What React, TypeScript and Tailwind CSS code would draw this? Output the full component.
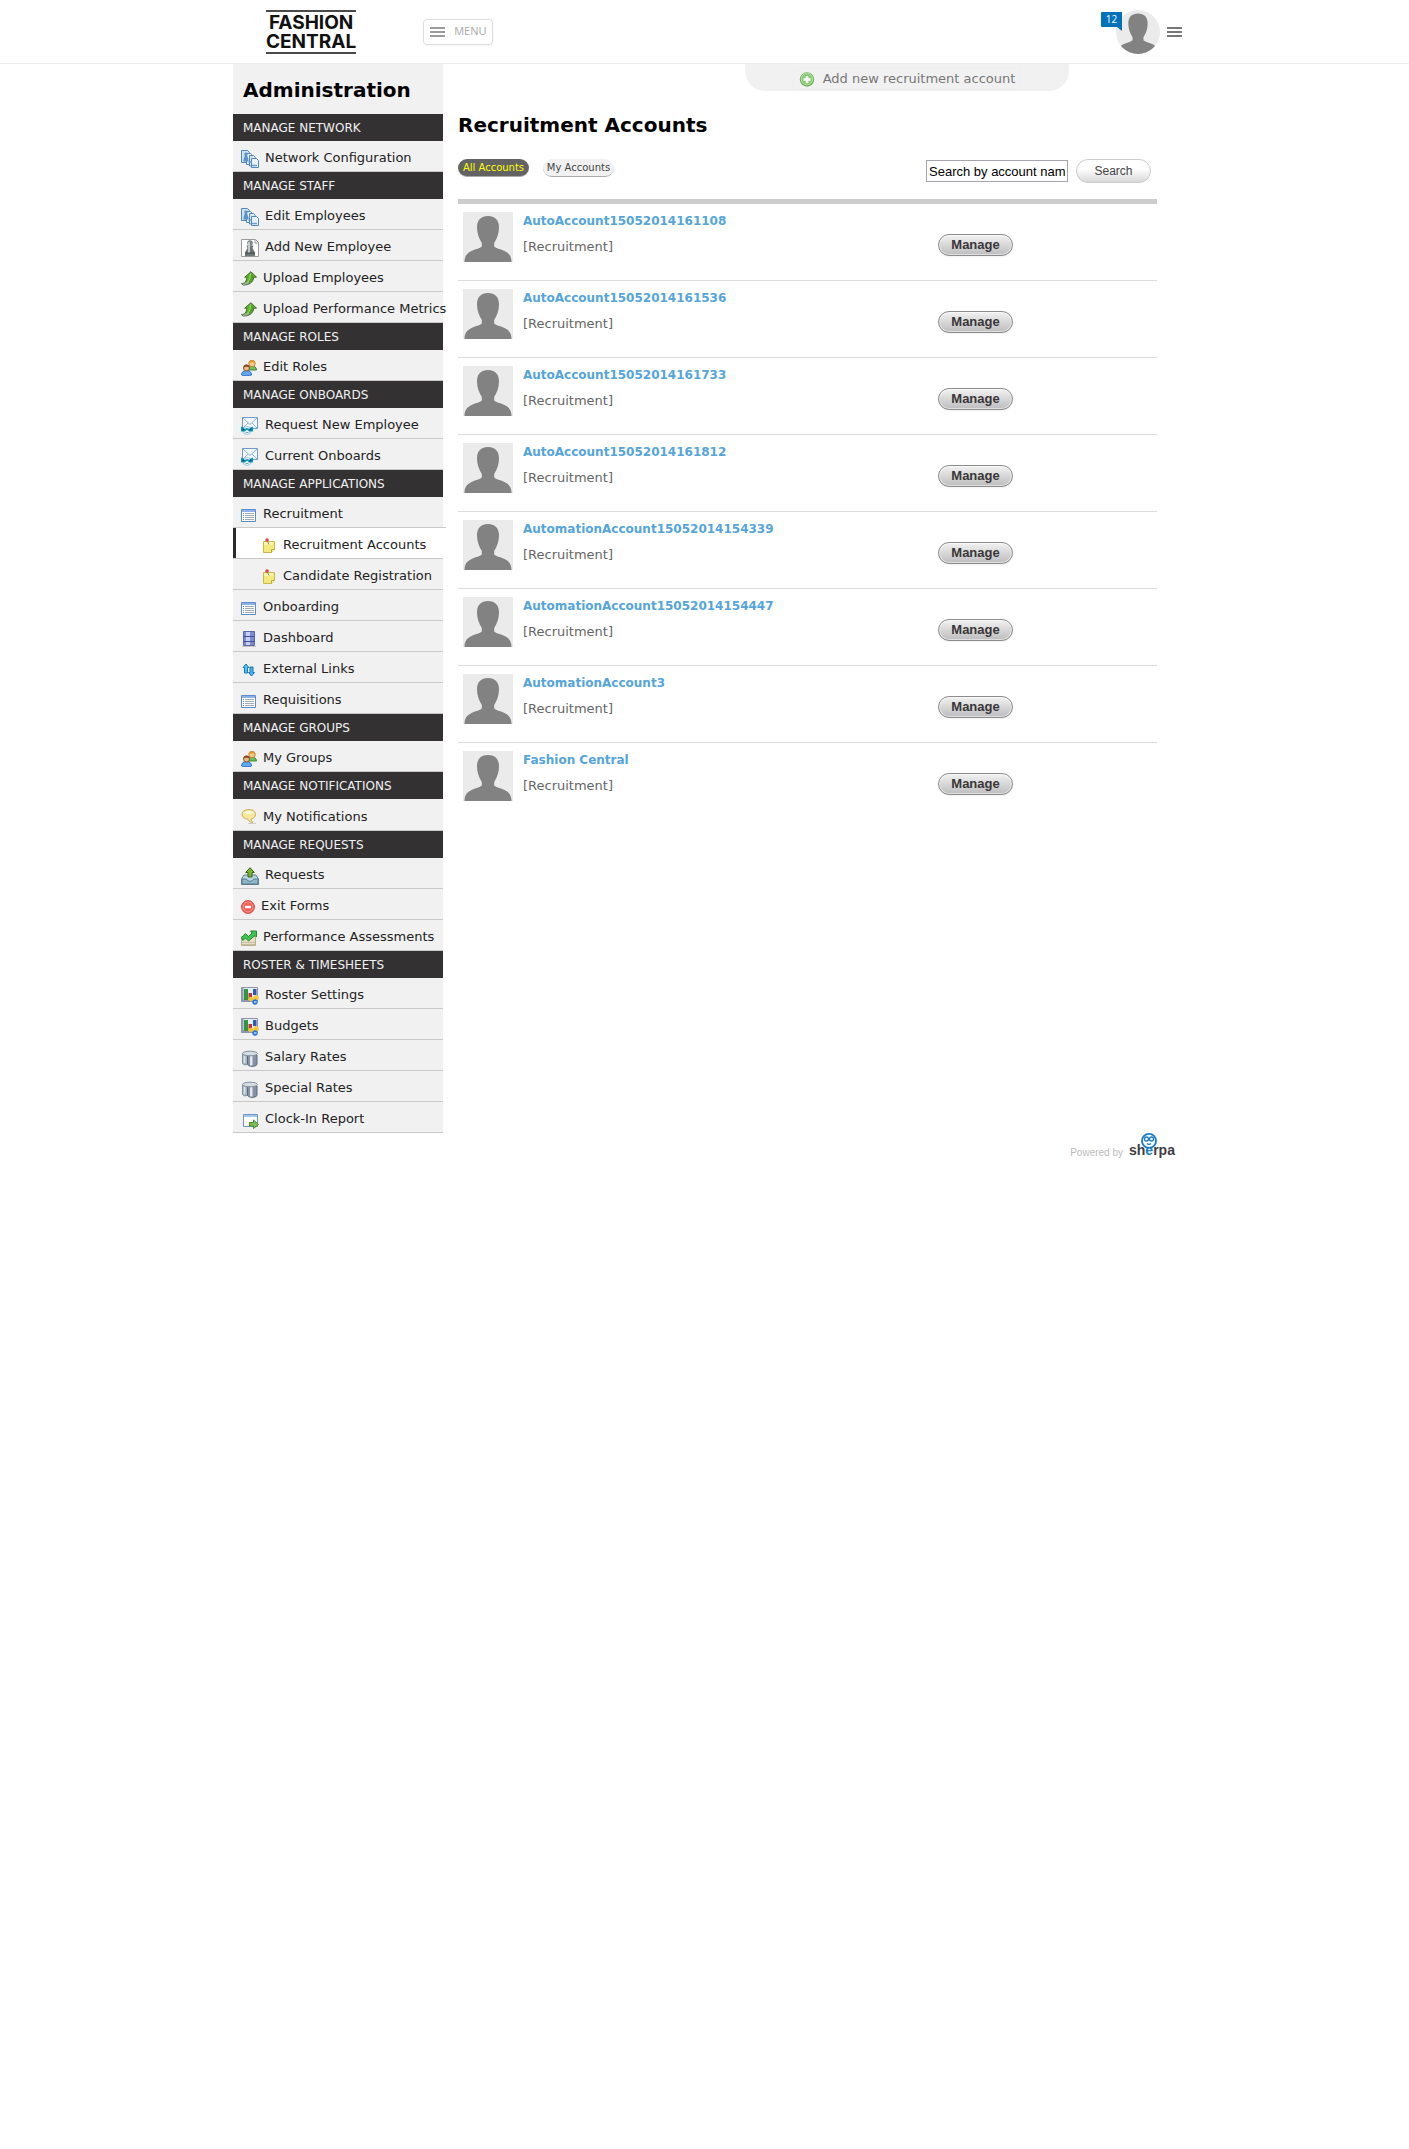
import React from 'react';

type IconProps = { className?: string };

const FilesIcon = () => (
  <svg width="18" height="18" viewBox="0 0 18 18" className="shrink-0">
    <g stroke="#4f86bd" fill="#eaf3fb">
      <path d="M.5.5h6l2 2v10h-8z" fill="#cfe2f3" />
      <path d="M5.500 3.500h4l2 2v9h-6z" />
      <path d="M8.500 5.500h4l2 2v8.500h-6z" fill="#d7e7f5" />
      <path d="M10.500 8.500h5l2 2v7h-7z" />
    </g>
    <path d="M5 2.500c2 0 2 2 1.200 3l1.300 4v2H2.500v-2l1.300-4C3 4.500 3 2.500 5 2.500z" fill="#5f92c6" />
    <path d="M7.500 12h3M11 15.500h5" stroke="#6b9bcb" strokeWidth="1.500" />
  </svg>
);

const PawnPageIcon = () => (
  <svg width="18" height="18" viewBox="0 0 18 18" className="shrink-0">
    <path d="M.5.5h14l3 3v14H.5z" fill="#fff" stroke="#9a9a9a" />
    <path d="M14 .5v3.500h3.500" fill="none" stroke="#9a9a9a" />
    <circle cx="9" cy="4" r="2.800" fill="#7d8585" />
    <path d="M5.500 6.500h7l-1 2.500 2.500 4.500v3.500H4v-3.500L6.500 9z" fill="#6d7676" />
    <path d="M8 3v11" stroke="#c5cbcb" strokeWidth="2" />
    <path d="M4.500 14h9" stroke="#3f4646" />
  </svg>
);

const UploadIcon = () => (
  <svg width="16" height="16" viewBox="0 0 16 16" className="shrink-0">
    <path d="M.5 12.500c3.500 0 5-2 5.300-6.300H3.700L10 .7l5.500 5.500h-2.700c-.6 5-4.300 8-11 7.800z" fill="#5bb524" stroke="#4b5f42" />
    <path d="M9.800 2.200L12.500 5c-.5 4-3 7-7 7.800C8 10.500 9 7.500 9.800 2.200z" fill="#4da31c" />
    <path d="M9.500 2.500c0 4-1 7-3 9" stroke="#a5e36e" fill="none" />
    <path d="M1 12.800c3 .2 5-1 6-3l1 2c-1 1.200-3 2.200-6 1.900z" fill="#aab2a6" />
  </svg>
);

const PeopleIcon = () => (
  <svg width="16" height="16" viewBox="0 0 16 16" className="shrink-0">
    <path d="M6 10c0-3 2-4 4.500-4S15.500 7 15.500 10z" fill="#6abf58" stroke="#3f8a35" />
    <circle cx="11" cy="3.500" r="3.200" fill="#f6c98c" stroke="#c8842c" />
    <path d="M7.700 3.500C7.500-.5 14.500-.5 14.300 3.500 13 2 9 2 7.700 3.500z" fill="#e29a2d" />
    <path d="M.6 15c0-3 1.800-4.500 4.900-4.500s5 1.500 5 4.500c-2 1-8 1-9.900 0z" fill="#5ea8f2" stroke="#2e6fc4" />
    <circle cx="5.500" cy="8" r="3" fill="#f0b98a" stroke="#8a5030" />
    <path d="M2.500 7.500c0-4 6-4 6 0-1.500-1-4.500-1-6 0z" fill="#8a4b2b" />
  </svg>
);

const MailPersonIcon = () => (
  <svg width="18" height="18" viewBox="0 0 18 18" className="shrink-0">
    <path d="M1.500.5h15v11h-15z" fill="#f1f6fb" stroke="#6f9cc4" />
    <path d="M2 1l7 6.500L16 1M2 11l5-5M16 11l-5-5" fill="none" stroke="#8fb1cf" />
    <circle cx="6" cy="13.500" r="4" fill="#e8f7fc" stroke="#9fc9da" />
    <path d="M0 9.500l2.500 1 1 1.500 2.500-1 2.500 1 .8-1.500 2.700-1v5H8L6.500 13h-1L4 14.500H0z" fill="#0e95bd" />
    <path d="M1.500 12.500h2M8.500 12.500h2" stroke="#0b4c6b" strokeWidth="1.500" />
    <path d="M4.500 15.500h3" stroke="#79a8ba" />
  </svg>
);

const ListIcon = () => (
  <svg width="16" height="16" viewBox="0 0 16 16" className="shrink-0">
    <path d="M.5 2.500h14v12H.5z" fill="#fff" stroke="#5b8bd0" />
    <path d="M1 3h13v2H1z" fill="#8db3e6" />
    <path d="M4 6.500h9M4 8.500h9M4 10.500h9M4 12.500h9" stroke="#a4abb5" />
    <path d="M2 6.500h1M2 8.500h1M2 10.500h1M2 12.500h1" stroke="#4f93d8" />
  </svg>
);

const NoteIcon = ({ className }: IconProps) => (
  <svg width="15" height="16" viewBox="0 0 15 16" className={'shrink-0 ' + (className ?? '')}>
    <path d="M1.500 3.500h11v8l-3 3h-8z" fill="#f2ea7c" stroke="#c9b94a" />
    <path d="M2 4h9v3H2z" fill="#f9f4a8" />
    <path d="M12.500 11.500h-3v3" fill="#fbf8c8" stroke="#b8a83c" />
    <path d="M5 2.500l2 4" stroke="#8c8c8c" />
    <circle cx="5" cy="2" r="1.800" fill="#d94a50" />
  </svg>
);

const ServerIcon = () => (
  <svg width="16" height="16" viewBox="0 0 16 16" className="shrink-0">
    <path d="M1 15.500h14" stroke="#c6c6c6" />
    <path d="M2.500.5h11v14h-11z" fill="#7c8bd0" stroke="#5a68ae" />
    <path d="M5 1h4v13H5z" fill="#c7d0f4" />
    <path d="M2.500 5.500h11M2.500 10.500h11" stroke="#3f4e99" />
  </svg>
);

const ArrowsIcon = () => (
  <svg width="16" height="16" viewBox="0 0 16 16" className="shrink-0">
    <path d="M5 2l3 3.500H6.500V11h-3V5.500H2z" fill="#4fc0f0" stroke="#1d7fc0" />
    <path d="M10.500 14l-3-3.500H9V5h3v5.500h1.500z" fill="#4fb2f0" stroke="#1d6fb8" />
  </svg>
);

const BubbleIcon = () => (
  <svg width="16" height="17" viewBox="0 0 16 17" className="mb-1 shrink-0">
    <path d="M8 1.500c4 0 6.500 2 6.500 4.700 0 2.600-2 4.500-4.500 4.800 0 1.500 1 2.500 2 3.500-3-.3-4.500-1.500-5.200-3.300C3.500 11 1 9 1 6.200 1 3.500 4 1.500 8 1.500z" fill="#f6e79a" stroke="#c9ae5c" />
    <path d="M3 5c1-2.500 8-3 10 0-2 1-8 1.500-10 0z" fill="#fffbe0" />
    <path d="M7 15.500h8" stroke="#ccc" />
  </svg>
);

const OutboxIcon = () => (
  <svg width="18" height="18" viewBox="0 0 18 18" className="shrink-0">
    <path d="M3 8h12l2.500 4v5.500H.5V12z" fill="#b9d6e4" stroke="#5b7d8e" />
    <path d="M1 12h4.500c.5 3 6.500 3 7 0H17v5H1z" fill="#8fb7ca" stroke="#5b7d8e" />
    <path d="M9 .7l4.300 4.800H11V10H7V5.500H4.700z" fill="#76b82f" stroke="#3f5f1f" />
  </svg>
);

const StopIcon = () => (
  <svg width="14" height="16" viewBox="0 0 14 16" className="shrink-0">
    <circle cx="7" cy="8" r="6.400" fill="#ee5f55" stroke="#d2433c" />
    <circle cx="7" cy="8" r="5" fill="none" stroke="#f79c93" />
    <path d="M4 8h6" stroke="#fff" strokeWidth="2.500" />
  </svg>
);

const GrowthIcon = () => (
  <svg width="16" height="16" viewBox="0 0 16 16" className="shrink-0">
    <path d="M.5 6.500h14v9H.5z" fill="#e6dfc6" stroke="#b9ae8a" />
    <path d="M1 12.500h13M1 14.500h13" stroke="#c9c0a0" />
    <path d="M.5 7.500l4-4 3 3 3.500-3.500L9.500 1h6v6l-1.500-1.500-6.500 5.500-3-3-2.500 2.500z" fill="#3fc24f" stroke="#218b32" />
  </svg>
);

const ChartIcon = () => (
  <svg width="18" height="18" viewBox="0 0 18 18" className="shrink-0">
    <path d="M.5.500h16v14H.5z" fill="#e9edf5" stroke="#8e94a8" />
    <path d="M0 .5h2.500v14H0zM2 12.500h9v2H2z" fill="#9298ac" />
    <path d="M3 2h4v11H3z" fill="#2c9a3c" />
    <path d="M7.500 6H11v6H7.500z" fill="#c52f38" />
    <path d="M12 2h3.500v6H12z" fill="#2e58b3" />
    <circle cx="9.800" cy="12" r="2.300" fill="#f5bf2c" />
    <circle cx="15" cy="11" r="2.800" fill="#f5c83c" />
    <circle cx="14" cy="15" r="2.700" fill="#2776d8" />
    <path d="M13 15h2.500" stroke="#fff" />
  </svg>
);

const CoinsIcon = () => (
  <svg width="18" height="18" viewBox="0 0 18 18" className="shrink-0">
    <path d="M1.500 5h5v10c-2 1.500-4 1-5-.5z" fill="#a9b4be" stroke="#8593a0" />
    <path d="M6.500 6H16v9.500c-2 2.500-7.500 2.500-9.500 0z" fill="#8393a3" stroke="#5a6b7c" />
    <path d="M9 7h2.500v9.500H9z" fill="#e3e9ee" />
    <ellipse cx="9" cy="4.500" rx="7.500" ry="2.300" fill="#d5dce2" stroke="#8593a0" />
    <path d="M3.500 7v7" stroke="#dfe5ea" strokeWidth="1.500" />
  </svg>
);

const WindowArrowIcon = () => (
  <svg width="18" height="18" viewBox="0 0 18 18" className="shrink-0">
    <path d="M2.500 3.500h14v12h-14z" fill="#fff" stroke="#6d96c8" />
    <path d="M3 4h13v2H3z" fill="#a9c6ea" />
    <path d="M8.500 11.500h4V9l5 4.500-5 4v-2.500h-4z" fill="#7cc152" stroke="#4b8a2b" />
  </svg>
);

const AddIcon = () => (
  <svg width="16" height="16" viewBox="0 0 16 16" className="shrink-0">
    <circle cx="8" cy="8.500" r="7.200" fill="#6fb45a" />
    <circle cx="8" cy="8" r="5.800" fill="#8ccc78" stroke="#b5dda8" />
    <path d="M8 5v7M4.500 8.500h7" stroke="#fff" strokeWidth="2.500" />
  </svg>
);

const Silhouette = ({ className }: IconProps) => (
  <svg viewBox="0 0 50 50" className={className}>
    <path d="M0 0h50v50H0z" fill="#ebebeb" />
    <path
      d="M25 4c7 0 11 4 11 11.500 0 6-2 11-4.800 15.500v3.500c1.800 2 6 2.500 9.800 4.200 5 2.300 7.500 5.300 7.500 11.300h-47c0-6 2.500-9 7.500-11.300 3.800-1.700 8-2.200 9.800-4.200V31C16 26.500 14 21.500 14 15.500 14 8 18 4 25 4z"
      fill="#828282"
    />
  </svg>
);

const Bars = ({ className }: IconProps) => (
  <svg width="15" height="10" viewBox="0 0 15 10" className={className} stroke="currentColor" strokeWidth="2">
    <path d="M0 1h15M0 5h15M0 9h15" />
  </svg>
);

type Item = { label: string; icon: React.ReactNode; sub?: boolean; active?: boolean; tall?: boolean };

const sections: { title: string; items: Item[] }[] = [
  { title: 'MANAGE NETWORK', items: [{ label: 'Network Configuration', icon: <FilesIcon /> }] },
  {
    title: 'MANAGE STAFF',
    items: [
      { label: 'Edit Employees', icon: <FilesIcon /> },
      { label: 'Add New Employee', icon: <PawnPageIcon /> },
      { label: 'Upload Employees', icon: <UploadIcon /> },
      { label: 'Upload Performance Metrics', icon: <UploadIcon /> },
    ],
  },
  { title: 'MANAGE ROLES', items: [{ label: 'Edit Roles', icon: <PeopleIcon /> }] },
  {
    title: 'MANAGE ONBOARDS',
    items: [
      { label: 'Request New Employee', icon: <MailPersonIcon /> },
      { label: 'Current Onboards', icon: <MailPersonIcon /> },
    ],
  },
  {
    title: 'MANAGE APPLICATIONS',
    items: [
      { label: 'Recruitment', icon: <ListIcon /> },
      { label: 'Recruitment Accounts', icon: <NoteIcon />, sub: true, active: true },
      { label: 'Candidate Registration', icon: <NoteIcon />, sub: true },
      { label: 'Onboarding', icon: <ListIcon /> },
      { label: 'Dashboard', icon: <ServerIcon /> },
      { label: 'External Links', icon: <ArrowsIcon /> },
      { label: 'Requisitions', icon: <ListIcon /> },
    ],
  },
  { title: 'MANAGE GROUPS', items: [{ label: 'My Groups', icon: <PeopleIcon /> }] },
  { title: 'MANAGE NOTIFICATIONS', items: [{ label: 'My Notifications', icon: <BubbleIcon />, tall: true }] },
  {
    title: 'MANAGE REQUESTS',
    items: [
      { label: 'Requests', icon: <OutboxIcon /> },
      { label: 'Exit Forms', icon: <StopIcon /> },
      { label: 'Performance Assessments', icon: <GrowthIcon /> },
    ],
  },
  {
    title: 'ROSTER & TIMESHEETS',
    items: [
      { label: 'Roster Settings', icon: <ChartIcon /> },
      { label: 'Budgets', icon: <ChartIcon /> },
      { label: 'Salary Rates', icon: <CoinsIcon /> },
      { label: 'Special Rates', icon: <CoinsIcon /> },
      { label: 'Clock-In Report', icon: <WindowArrowIcon /> },
    ],
  },
];

const accounts = [
  'AutoAccount15052014161108',
  'AutoAccount15052014161536',
  'AutoAccount15052014161733',
  'AutoAccount15052014161812',
  'AutomationAccount15052014154339',
  'AutomationAccount15052014154447',
  'AutomationAccount3',
  'Fashion Central',
];

function Header() {
  return (
    <header className="border-b border-[#ececec]">
      <div className="mx-auto flex h-[63px] max-w-[955px] items-center">
        <a
          href="#home"
          className="ml-[39px] flex h-11 flex-col justify-center border-y-2 border-[#4a4a4a] text-center font-['Inter',sans-serif] text-[19px] leading-[19px] font-bold text-[#111]"
        >
          <span>FASHION</span>
          <span>CENTRAL</span>
        </a>
        <button
          type="button"
          className="ml-[67px] flex h-[26px] items-center gap-[9px] rounded border border-[#dedede] px-[6px] font-['Open_Sans',sans-serif] text-[11px] text-[#a9a9a9] shadow-xs"
        >
          <Bars className="text-[#9b9b9b]" />
          MENU
        </button>
        <div className="ml-auto flex items-center gap-[7px]">
          <a href="#profile" aria-label="Profile, 12 notifications" className="relative">
            <Silhouette className="size-11 rounded-full" />
            <span className="absolute top-[2px] left-[-15px] flex h-[15px] w-[21px] items-center justify-center rounded-l-[1px] bg-[#0072bc] font-['Open_Sans',sans-serif] text-[10px] text-white">
              12
              <svg width="5" height="5" viewBox="0 0 5 5" className="absolute top-full right-0">
                <path d="M0 0h5v4z" fill="#0072bc" />
              </svg>
            </span>
          </a>
          <button type="button" aria-label="Open menu">
            <Bars className="text-[#777]" />
          </button>
        </div>
      </div>
    </header>
  );
}

function Sidebar() {
  return (
    <nav className="w-[210px] shrink-0 bg-[#f1f1f1] text-[13px] leading-5">
      <h2 className="px-[10px] pt-[14px] pb-3 text-[20px] leading-6 font-bold text-black">Administration</h2>
      {sections.map((s) => (
        <section key={s.title}>
          <h3 className="bg-[#343133] px-[10px] pt-1 pb-[3px] text-[12px] text-[#f1f1f1]">{s.title}</h3>
          <ul className="border-b border-[#c8c8c8]">
            {s.items.map((it) => (
              <li
                key={it.label}
                className={
                  'border-t border-[#c8c8c8] first:border-t-0 ' + (it.active ? '-mr-[3px] bg-white' : '')
                }
              >
                <a
                  href="#item"
                  className={
                    'flex items-end gap-[6px] pb-[3px] whitespace-nowrap text-[#222] ' +
                    (it.tall ? 'h-[31px] ' : 'h-[30px] ') +
                    (it.active ? 'border-l-[3px] border-[#2b2b2b] pl-[26px]' : it.sub ? 'pl-[29px]' : 'pl-2')
                  }
                >
                  <span className="flex h-[18px] items-center">{it.icon}</span>
                  <span>{it.label}</span>
                </a>
              </li>
            ))}
          </ul>
        </section>
      ))}
    </nav>
  );
}

function Tab({ label, active }: { label: string; active?: boolean }) {
  return (
    <button
      type="button"
      className={
        'h-[18px] w-[71px] rounded-full border-b pt-px text-[10px] leading-4 whitespace-nowrap ' +
        (active ? 'border-[#aaa] bg-[#636363] text-[#ff0]' : 'border-[#aaa] bg-[#f1f1f1] text-[#444]')
      }
    >
      {label}
    </button>
  );
}

function Main() {
  return (
    <main className="mr-[19px] ml-[15px] min-w-0 flex-1">
      <div className="mr-[88px] ml-auto flex h-[27px] w-[324px] items-end justify-center rounded-b-[20px] bg-[#f1f1f1] pb-px">
        <a href="#add" className="flex items-center gap-2 border border-[#eee] px-[5px] text-[13px] leading-5 text-[#777]">
          <AddIcon />
          Add new recruitment account
        </a>
      </div>
      <h1 className="mt-[22px] text-[20px] leading-6 font-bold text-black">Recruitment Accounts</h1>
      <div className="mt-[22px] flex items-start">
        <div className="flex gap-[14px]">
          <Tab label="All Accounts" active />
          <Tab label="My Accounts" />
        </div>
        <form className="mr-[6px] ml-auto flex items-center gap-2" onSubmit={(e) => e.preventDefault()}>
          <input
            type="text"
            aria-label="Search by account name"
            defaultValue="Search by account name"
            className="h-[22px] w-[142px] border border-[#a5a5ad] px-[2px] font-['Liberation_Sans',sans-serif] text-[13px] text-black"
          />
          <button
            type="submit"
            className="h-6 w-[75px] rounded-full border border-[#ccc] bg-linear-to-b from-white from-40% to-[#d8d8d8] font-['Liberation_Sans',sans-serif] text-[12px] text-[#444]"
          >
            Search
          </button>
        </form>
      </div>
      <ul className="mt-4 border-t-[5px] border-[#ccc]">
        {accounts.map((name) => (
          <li key={name} className="flex h-[77px] items-start border-b border-[#ddd] pt-2 pl-[5px] last:border-b-0">
            <Silhouette className="size-[50px] shrink-0" />
            <div className="ml-[10px] flex-1 text-[13px] leading-[18px]">
              <a href="#account" className="block text-[12px] font-bold text-[#55a5dc]">
                {name}
              </a>
              <p className="mt-2 text-[#666]">[Recruitment]</p>
            </div>
            <button
              type="button"
              className="mt-[22px] mr-36 h-[22px] w-[75px] rounded-full border border-[#8c8c8c] bg-linear-to-b from-[#f2f2f2] to-[#bdbdbf] font-['Liberation_Sans',sans-serif] text-[13px] font-bold text-[#3a3638] shadow-xs inset-ring inset-ring-white/50"
            >
              Manage
            </button>
          </li>
        ))}
      </ul>
    </main>
  );
}

function Footer() {
  return (
    <footer className="flex items-end justify-end gap-[6px] font-['Liberation_Sans',sans-serif] text-[10px] leading-3 text-[#bbb]">
      <span>Powered by</span>
      <svg width="47" height="26" viewBox="0 0 47 26" role="img" aria-label="sherpa">
        <text x="0" y="22" fontFamily="Liberation Sans, sans-serif" fontWeight="bold" fontSize="14" fill="#3f3d40">
          sh<tspan fill="#1b7cc4">e</tspan>rpa
        </text>
        <circle cx="20" cy="7.900" r="7" fill="#fff" stroke="#1b7cc4" strokeWidth="1.800" />
        <g fill="none" stroke="#1b7cc4" strokeWidth="1.300">
          <circle cx="17.500" cy="6" r="2" />
          <circle cx="22.500" cy="6" r="2" />
          <path d="M18 10.500c1 1 3 1 4 0" />
        </g>
      </svg>
    </footer>
  );
}

export default function App() {
  return (
    <div className="min-h-screen bg-white font-['DejaVu_Sans',Verdana,sans-serif]">
      <Header />
      <div className="mx-auto max-w-[943px]">
        <div className="flex items-stretch">
          <Sidebar />
          <Main />
        </div>
        <Footer />
      </div>
    </div>
  );
}
